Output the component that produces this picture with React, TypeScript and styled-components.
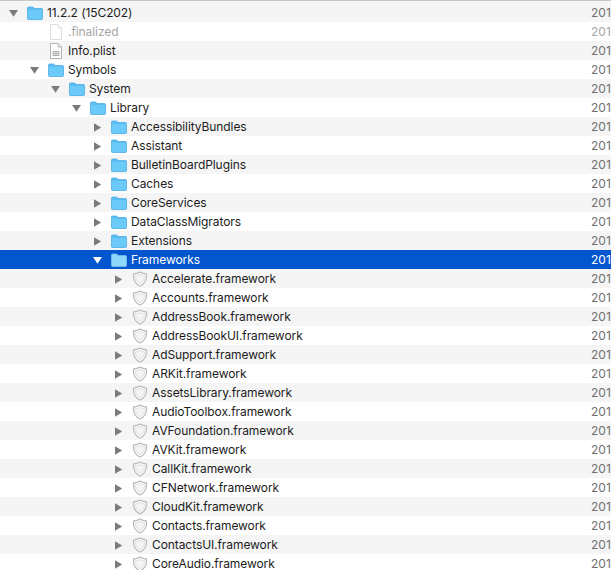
import React from 'react';
import styled, { createGlobalStyle } from 'styled-components';

const GlobalStyle = createGlobalStyle`
  html, body {
    margin: 0;
    padding: 0;
    height: 100%;
    background: #fff;
    overflow: hidden;
  }
  body {
    font-family: Inter, "Liberation Sans", Arial, sans-serif;
  }
`;

const Outline = styled.div`
  width: 611px;
  height: 570px;
  overflow: hidden;
  padding-top: 2px;
  box-sizing: border-box;
  border-top: 1px solid #c8c8c8;
  background: linear-gradient(#f5f5f5 2px, #fff 2px);
`;

const Row = styled.div<{ $stripe: boolean; $selected: boolean }>`
  display: flex;
  align-items: center;
  height: 19px;
  background: ${(p) => (p.$selected ? '#0456cf' : p.$stripe ? '#f5f5f5' : '#fff')};
  color: ${(p) => (p.$selected ? '#fff' : '#1c1c1c')};
`;

const Name = styled.div<{ $dim: boolean }>`
  flex: 1;
  font-size: 12px;
  letter-spacing: -0.08px;
  white-space: nowrap;
  margin-left: 4px;
  color: ${(p) => (p.$dim ? '#a6a6a6' : 'inherit')};
`;

const DateCell = styled.div<{ $selected: boolean; $dim: boolean }>`
  width: 20px;
  font-size: 12px;
  white-space: nowrap;
  color: ${(p) => (p.$selected ? '#fff' : p.$dim ? '#a6a6a6' : '#6f6f6f')};
`;

const Indent = styled.div<{ $level: number }>`
  flex: none;
  width: ${(p) => 8 + p.$level * 21}px;
`;

const Slot = styled.div`
  flex: none;
  width: 12px;
  height: 12px;
  margin-right: 7px;
`;

const IconBox = styled.svg`
  flex: none;
  display: block;
`;

const Disclosure = ({ open, selected }: { open?: boolean; selected: boolean }) => (
  <IconBox width="12" height="12" viewBox="0 0 12 12">
    {open ? (
      <polygon points="1,3 10,3 5.5,9.7" fill={selected ? '#fff' : '#7b7b7b'} />
    ) : (
      <polygon points="2,2.3 9.2,6.5 2,10.7" fill="#7b7b7b" />
    )}
  </IconBox>
);

const Folder = ({ selected }: { selected: boolean }) => (
  <IconBox width="16" height="14" viewBox="0 0 16 14">
    <path
      d="M0.5 2 Q0.5 1 1.5 1 H5.8 L7 2.6 H14.5 Q15.5 2.6 15.5 3.6 V12.5 Q15.5 13.5 14.5 13.5 H1.5 Q0.5 13.5 0.5 12.5 Z"
      fill={selected ? '#8ed4fa' : '#5cbdf3'}
      stroke={selected ? '#7cc8f5' : '#3fa6e4'}
      strokeWidth="0.7"
    />
    <rect x="1" y="4" width="14" height="9" fill={selected ? '#8ed8fb' : '#6ccaf8'} />
  </IconBox>
);

const Shield = () => (
  <IconBox width="16" height="16" viewBox="0 0 16 16">
    <path
      d="M8 1.2 C10 2.2 12 2.8 14.4 3 C15 8 13 12.6 8 15 C3 12.6 1 8 1.6 3 C4 2.8 6 2.2 8 1.2 Z"
      fill="#fcfcfc"
      stroke="#bdbdbd"
      strokeWidth="1.3"
    />
    <path
      d="M8 3.6 C9.6 4.3 11 4.7 12.6 4.9 C12.7 8 11.2 10.9 8 12.6 C4.8 10.9 3.3 8 3.4 4.9 C5 4.7 6.4 4.3 8 3.6 Z"
      fill="#f4f4f4"
      stroke="#dcdcdc"
      strokeWidth="0.8"
    />
  </IconBox>
);

const Doc = ({ plist }: { plist?: boolean }) => (
  <IconBox width="16" height="16" viewBox="0 0 16 16">
    <path d="M2.5 0.5 H10 L13.5 4 V15.5 H2.5 Z" fill="#fff" stroke={plist ? '#b4b4b4' : '#dedede'} />
    <path d="M10 0.5 V4 H13.5" fill="none" stroke={plist ? '#b4b4b4' : '#dedede'} />
    {plist && <path d="M5 8.5 H11 V12.5 H5 Z M5 10.5 H11 M8 8.5 V12.5" fill="none" stroke="#9a9a9a" strokeWidth="0.8" />}
  </IconBox>
);

type Kind = 'folder' | 'shield' | 'doc' | 'plist';

interface Item {
  name: string;
  level: number;
  kind: Kind;
  arrow?: 'open' | 'closed';
  dim?: boolean;
  selected?: boolean;
}

const frameworks = [
  'Accelerate', 'Accounts', 'AddressBook', 'AddressBookUI', 'AdSupport', 'ARKit', 'AssetsLibrary',
  'AudioToolbox', 'AVFoundation', 'AVKit', 'CallKit', 'CFNetwork', 'CloudKit', 'Contacts', 'ContactsUI', 'CoreAudio',
];

const libraryFolders = [
  'AccessibilityBundles', 'Assistant', 'BulletinBoardPlugins', 'Caches', 'CoreServices', 'DataClassMigrators', 'Extensions',
];

const items: Item[] = [
  { name: '11.2.2 (15C202)', level: 0, kind: 'folder', arrow: 'open' },
  { name: '.finalized', level: 1, kind: 'doc', dim: true },
  { name: 'Info.plist', level: 1, kind: 'plist' },
  { name: 'Symbols', level: 1, kind: 'folder', arrow: 'open' },
  { name: 'System', level: 2, kind: 'folder', arrow: 'open' },
  { name: 'Library', level: 3, kind: 'folder', arrow: 'open' },
  ...libraryFolders.map((name): Item => ({ name, level: 4, kind: 'folder', arrow: 'closed' })),
  { name: 'Frameworks', level: 4, kind: 'folder', arrow: 'open', selected: true },
  ...frameworks.map((f): Item => ({ name: `${f}.framework`, level: 5, kind: 'shield', arrow: 'closed' })),
];

const App = () => (
  <>
    <GlobalStyle />
    <Outline>
      {items.map((item, i) => (
        <Row key={item.name} $stripe={i % 2 === 0} $selected={!!item.selected}>
          <Indent $level={item.level} />
          <Slot>{item.arrow && <Disclosure open={item.arrow === 'open'} selected={!!item.selected} />}</Slot>
          {item.kind === 'folder' && <Folder selected={!!item.selected} />}
          {item.kind === 'shield' && <Shield />}
          {item.kind === 'doc' && <Doc />}
          {item.kind === 'plist' && <Doc plist />}
          <Name $dim={!!item.dim}>{item.name}</Name>
          <DateCell $selected={!!item.selected} $dim={!!item.dim}>201</DateCell>
        </Row>
      ))}
    </Outline>
  </>
);

export default App;
